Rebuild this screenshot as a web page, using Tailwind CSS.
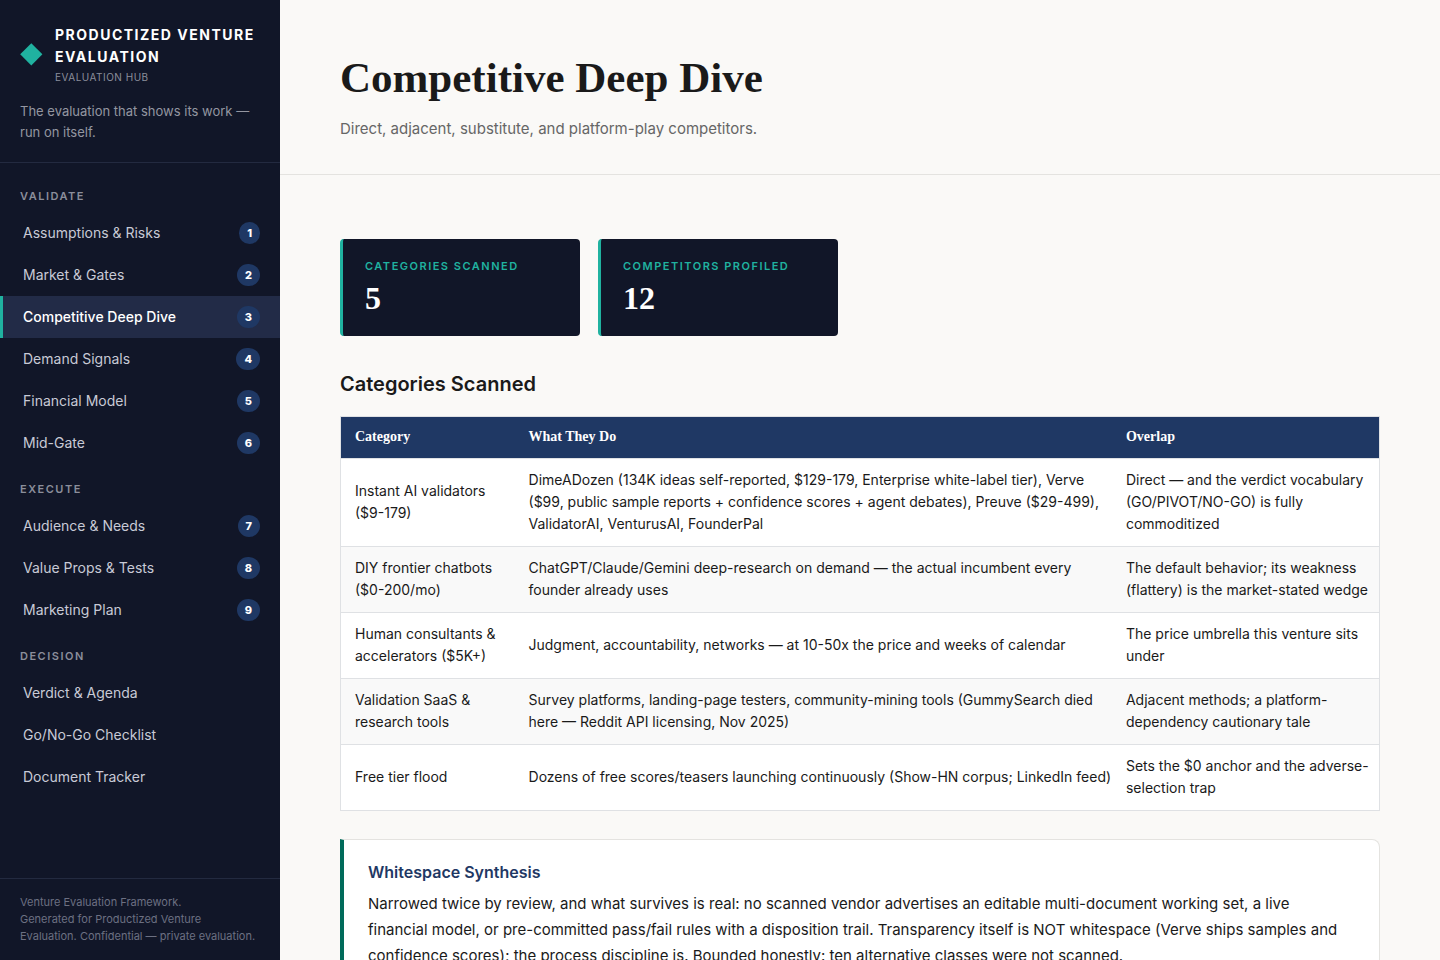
<!DOCTYPE html>
<html lang="en">
  <head>
    <meta charset="UTF-8" />
    <meta name="viewport" content="width=device-width, initial-scale=1.0" />
    <title>Competitive Deep Dive</title>
    <script src="https://cdn.jsdelivr.net/npm/@tailwindcss/browser@4"></script>
  </head>
  <body class="flex h-screen overflow-hidden bg-[#faf9f7] font-[Inter,sans-serif] text-[#1a1a1a]">
    <!-- Sidebar -->
    <aside class="flex h-full w-[280px] shrink-0 flex-col bg-[#111628]">
      <div class="border-b border-[#232a40] px-5 pt-6 pb-[19px]">
        <div class="flex items-center gap-3">
          <svg class="h-[25px] w-[23px] shrink-0" viewBox="0 0 23 25" fill="#20b2a0">
            <path d="M11.3 0.2 22.4 11.3 11.3 22.4 0.2 11.3Z" />
          </svg>
          <div>
            <p class="text-sm leading-[22px] font-bold tracking-[1.5px] text-white uppercase">Productized Venture Evaluation</p>
            <p class="text-[10px] leading-[18px] tracking-wider text-[#8b8e9b] uppercase">Evaluation Hub</p>
          </div>
        </div>
        <p class="mt-[15px] text-[13px] leading-[21px] text-[#9496a1]">The evaluation that shows its work — run on itself.</p>
      </div>

      <nav class="flex flex-1 flex-col gap-4 pt-6 text-sm leading-[22px] text-[#c8cad6]">
        <section>
          <h2 class="px-5 pb-[7px] text-[11px] leading-[18px] font-semibold tracking-[1.5px] text-[#8b8e9b] uppercase">Validate</h2>
          <ul>
            <li>
              <a href="#" class="flex items-center justify-between border-l-3 border-transparent px-5 py-[10px]">
                Assumptions &amp; Risks
                <span class="rounded-full bg-[#1f3864] px-2 text-[11px] font-extrabold text-white">1</span>
              </a>
            </li>
            <li>
              <a href="#" class="flex items-center justify-between border-l-3 border-transparent px-5 py-[10px]">
                Market &amp; Gates
                <span class="rounded-full bg-[#1f3864] px-2 text-[11px] font-extrabold text-white">2</span>
              </a>
            </li>
            <li>
              <a href="#" class="flex items-center justify-between border-l-3 border-[#20b2a0] bg-[#222b47] px-5 py-[10px] font-medium text-white">
                Competitive Deep Dive
                <span class="rounded-full bg-[#1f3864] px-2 text-[11px] font-extrabold text-white">3</span>
              </a>
            </li>
            <li>
              <a href="#" class="flex items-center justify-between border-l-3 border-transparent px-5 py-[10px]">
                Demand Signals
                <span class="rounded-full bg-[#1f3864] px-2 text-[11px] font-extrabold text-white">4</span>
              </a>
            </li>
            <li>
              <a href="#" class="flex items-center justify-between border-l-3 border-transparent px-5 py-[10px]">
                Financial Model
                <span class="rounded-full bg-[#1f3864] px-2 text-[11px] font-extrabold text-white">5</span>
              </a>
            </li>
            <li>
              <a href="#" class="flex items-center justify-between border-l-3 border-transparent px-5 py-[10px]">
                Mid-Gate
                <span class="rounded-full bg-[#1f3864] px-2 text-[11px] font-extrabold text-white">6</span>
              </a>
            </li>
          </ul>
        </section>
        <section>
          <h2 class="px-5 pb-[7px] text-[11px] leading-[18px] font-semibold tracking-[1.5px] text-[#8b8e9b] uppercase">Execute</h2>
          <ul>
            <li>
              <a href="#" class="flex items-center justify-between border-l-3 border-transparent px-5 py-[10px]">
                Audience &amp; Needs
                <span class="rounded-full bg-[#1f3864] px-2 text-[11px] font-extrabold text-white">7</span>
              </a>
            </li>
            <li>
              <a href="#" class="flex items-center justify-between border-l-3 border-transparent px-5 py-[10px]">
                Value Props &amp; Tests
                <span class="rounded-full bg-[#1f3864] px-2 text-[11px] font-extrabold text-white">8</span>
              </a>
            </li>
            <li>
              <a href="#" class="flex items-center justify-between border-l-3 border-transparent px-5 py-[10px]">
                Marketing Plan
                <span class="rounded-full bg-[#1f3864] px-2 text-[11px] font-extrabold text-white">9</span>
              </a>
            </li>
          </ul>
        </section>
        <section>
          <h2 class="px-5 pb-[7px] text-[11px] leading-[18px] font-semibold tracking-[1.5px] text-[#8b8e9b] uppercase">Decision</h2>
          <ul>
            <li><a href="#" class="block border-l-3 border-transparent px-5 py-[10px]">Verdict &amp; Agenda</a></li>
            <li><a href="#" class="block border-l-3 border-transparent px-5 py-[10px]">Go/No-Go Checklist</a></li>
            <li><a href="#" class="block border-l-3 border-transparent px-5 py-[10px]">Document Tracker</a></li>
          </ul>
        </section>
      </nav>

      <footer class="border-t border-[#232a40] px-5 py-[15px] text-[11px] leading-[17px] text-[#6c7082]">
        Venture Evaluation Framework.<br />
        Generated for Productized Venture Evaluation. Confidential — private evaluation.
      </footer>
    </aside>

    <!-- Content -->
    <main class="min-w-0 flex-1 overflow-y-auto">
      <header class="border-b border-[#e4e3e0] px-[60px] pt-12 pb-8">
        <h1 class="mb-2 font-['Liberation_Serif',serif] text-[43px] leading-[60px] font-bold">Competitive Deep Dive</h1>
        <p class="text-[15px] leading-[26px] text-[#666666]">Direct, adjacent, substitute, and platform-play competitors.</p>
      </header>

      <div class="px-[60px] pt-16 pb-16">
        <div class="flex gap-[18px]">
          <div class="w-[240px] rounded border-l-3 border-[#20b2a0] bg-[#111628] px-[22px] pt-[18px] pb-[19px]">
            <p class="text-[11px] leading-[18px] font-semibold tracking-[1.5px] text-[#20b2a0] uppercase">Categories Scanned</p>
            <p class="mt-1 font-['Liberation_Serif',serif] text-[32px] leading-[38px] font-bold text-white">5</p>
          </div>
          <div class="w-[240px] rounded border-l-3 border-[#20b2a0] bg-[#111628] px-[22px] pt-[18px] pb-[19px]">
            <p class="text-[11px] leading-[18px] font-semibold tracking-[1.5px] text-[#20b2a0] uppercase">Competitors Profiled</p>
            <p class="mt-1 font-['Liberation_Serif',serif] text-[32px] leading-[38px] font-bold text-white">12</p>
          </div>
        </div>

        <h2 class="mt-8 mb-4 text-xl leading-8 font-semibold">Categories Scanned</h2>

        <table class="w-full table-fixed border-collapse border border-[#dfe1e4] bg-white text-left text-sm leading-[22px]">
          <thead>
            <tr class="bg-[#1f3864] font-['Liberation_Serif',serif] text-white">
              <th class="w-[16.75%] pt-[9px] pr-2 pb-[10px] pl-[14px] font-bold">Category</th>
              <th class="w-[57.5%] pt-[9px] pb-[10px] pl-[14px] font-bold">What They Do</th>
              <th class="pt-[9px] pr-2 pb-[10px] pl-[14px] font-bold">Overlap</th>
            </tr>
          </thead>
          <tbody>
            <tr class="border-t border-[#dfe1e4]">
              <td class="pt-[10px] pr-2 pb-[11px] pl-[14px]">Instant AI validators ($9-179)</td>
              <td class="pt-[10px] pb-[11px] pl-[14px]">DimeADozen (134K ideas self-reported, $129-179, Enterprise white-label tier), Verve ($99, public sample reports + confidence scores + agent debates), Preuve ($29-499), ValidatorAI, VenturusAI, FounderPal</td>
              <td class="pt-[10px] pr-2 pb-[11px] pl-[14px]">Direct — and the verdict vocabulary (GO/PIVOT/NO-GO) is fully commoditized</td>
            </tr>
            <tr class="border-t border-[#dfe1e4] bg-[#f9f9f9]">
              <td class="pt-[10px] pr-2 pb-[11px] pl-[14px]">DIY frontier chatbots ($0-200/mo)</td>
              <td class="pt-[10px] pb-[11px] pl-[14px]">ChatGPT/Claude/Gemini deep-research on demand — the actual incumbent every founder already uses</td>
              <td class="pt-[10px] pr-2 pb-[11px] pl-[14px]">The default behavior; its weakness (flattery) is the market-stated wedge</td>
            </tr>
            <tr class="border-t border-[#dfe1e4]">
              <td class="pt-[10px] pr-2 pb-[11px] pl-[14px]">Human consultants &amp; accelerators ($5K+)</td>
              <td class="pt-[10px] pb-[11px] pl-[14px]">Judgment, accountability, networks — at 10-50x the price and weeks of calendar</td>
              <td class="pt-[10px] pr-2 pb-[11px] pl-[14px]">The price umbrella this venture sits under</td>
            </tr>
            <tr class="border-t border-[#dfe1e4] bg-[#f9f9f9]">
              <td class="pt-[10px] pr-2 pb-[11px] pl-[14px]">Validation SaaS &amp; research tools</td>
              <td class="pt-[10px] pb-[11px] pl-[14px]">Survey platforms, landing-page testers, community-mining tools (GummySearch died here — Reddit API licensing, Nov 2025)</td>
              <td class="pt-[10px] pr-2 pb-[11px] pl-[14px]">Adjacent methods; a platform-dependency cautionary tale</td>
            </tr>
            <tr class="border-t border-[#dfe1e4]">
              <td class="pt-[10px] pr-2 pb-[11px] pl-[14px]">Free tier flood</td>
              <td class="pt-[10px] pb-[11px] pl-[14px]">Dozens of free scores/teasers launching continuously (Show-HN corpus; LinkedIn feed)</td>
              <td class="pt-[10px] pr-2 pb-[11px] pl-[14px]">Sets the $0 anchor and the adverse-selection trap</td>
            </tr>
          </tbody>
        </table>

        <section class="mt-7 rounded-r-lg border border-l-4 border-[#e4e3e0] border-l-[#006b5a] bg-white pt-[19px] pr-8 pb-6 pl-6">
          <h3 class="text-base leading-[26px] font-semibold text-[#1f3864]">Whitespace Synthesis</h3>
          <p class="mt-[6px] text-[15px] leading-[26px]">Narrowed twice by review, and what survives is real: no scanned vendor advertises an editable multi-document working set, a live financial model, or pre-committed pass/fail rules with a disposition trail. Transparency itself is NOT whitespace (Verve ships samples and confidence scores); the process discipline is. Bounded honestly: ten alternative classes were not scanned.</p>
        </section>
      </div>
    </main>
  </body>
</html>
